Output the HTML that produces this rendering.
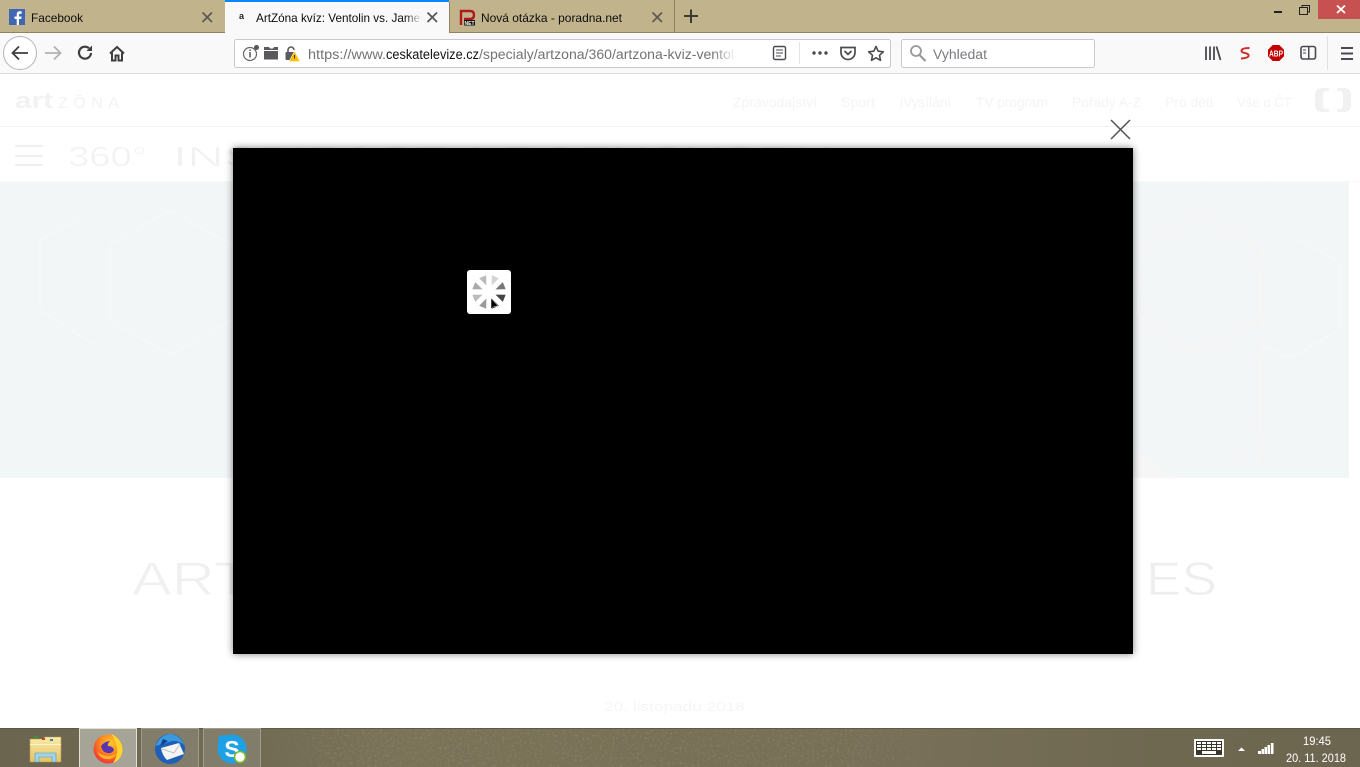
<!DOCTYPE html>
<html lang="cs"><head><meta charset="utf-8"><title>ArtZóna kvíz</title>
<style>
html,body{margin:0;padding:0;width:1360px;height:767px;overflow:hidden;background:#fff}
svg{display:block;position:absolute;left:0;top:0}
text{font-family:"Liberation Sans",sans-serif}
</style></head><body>
<svg width="1360" height="767" viewBox="0 0 1360 767" xmlns="http://www.w3.org/2000/svg">
<defs>
<linearGradient id="fade" x1="0" x2="1"><stop offset="0" stop-color="#f9f9fa" stop-opacity="0"/><stop offset="1" stop-color="#f9f9fa"/></linearGradient>
<linearGradient id="fadew" x1="0" x2="1"><stop offset="0" stop-color="#fff" stop-opacity="0"/><stop offset="1" stop-color="#fff"/></linearGradient>
<linearGradient id="tb" x1="0" x2="1" y1="0" y2="0">
<stop offset="0" stop-color="#6b6550"/><stop offset=".2" stop-color="#736c55"/><stop offset=".3" stop-color="#7a7358"/><stop offset=".5" stop-color="#777056"/><stop offset=".68" stop-color="#776f57"/><stop offset=".85" stop-color="#6f6851"/><stop offset="1" stop-color="#6c6650"/></linearGradient>
<linearGradient id="mk" x1="0" x2="1"><stop offset="0" stop-color="#fff" stop-opacity="0"/><stop offset=".1" stop-color="#fff"/><stop offset=".85" stop-color="#fff"/><stop offset="1" stop-color="#fff" stop-opacity="0"/></linearGradient>
<mask id="tbm" maskUnits="userSpaceOnUse" x="262" y="728" width="700" height="39"><rect x="262" y="728" width="700" height="39" fill="url(#mk)"/></mask>
<filter id="noise" x="0" y="0" width="100%" height="100%"><feTurbulence type="fractalNoise" baseFrequency=".4" numOctaves="3" seed="4"/><feColorMatrix values="0 0 0 0 .62 0 0 0 0 .58 0 0 0 0 .44 0 0 0 1.6 -.8"/></filter>
<radialGradient id="ff" cx=".6" cy=".3" r=".8"><stop offset="0" stop-color="#ffc82e"/><stop offset=".45" stop-color="#ff8a1f"/><stop offset=".8" stop-color="#f5452c"/><stop offset="1" stop-color="#e0305a"/></radialGradient>
<linearGradient id="fold" x1="0" x2="0" y1="0" y2="1"><stop offset="0" stop-color="#fbeaa8"/><stop offset="1" stop-color="#e5c466"/></linearGradient>
<filter id="sh" x="-5%" y="-5%" width="110%" height="110%"><feGaussianBlur stdDeviation="4"/></filter>
</defs>

<!-- page (ghosted behind overlay) -->
<rect width="1360" height="767" fill="#fff"/>
<g fill="#f2f2f2">
<text x="15" y="108" font-size="22" font-weight="700" textLength="38" lengthAdjust="spacingAndGlyphs">art</text>
<text x="58" y="108" font-size="16" fill="#f2f2f2" textLength="61" lengthAdjust="spacing">ZŌNA</text>
<g font-size="14" fill="#f4f4f4">
<text x="733" y="107" textLength="84" lengthAdjust="spacingAndGlyphs">Zpravodajství</text>
<text x="841" y="107" textLength="34" lengthAdjust="spacingAndGlyphs">Sport</text>
<text x="900" y="107" textLength="51" lengthAdjust="spacingAndGlyphs">iVysílání</text>
<text x="976" y="107" textLength="72" lengthAdjust="spacingAndGlyphs">TV program</text>
<text x="1072" y="107" textLength="69" lengthAdjust="spacingAndGlyphs">Pořady A-Z</text>
<text x="1165" y="107" textLength="48" lengthAdjust="spacingAndGlyphs">Pro děti</text>
<text x="1237" y="107" textLength="55" lengthAdjust="spacingAndGlyphs">Vše o ČT</text>
</g>
</g>
<path d="M1329 88h-6q-8 0-8 7v10q0 7 8 7h6v-3h-2q-4 0-4-4V95q0-4 4-4h2zM1337 88h6q8 0 8 7v10q0 7-8 7h-6v-3h2q4 0 4-4V95q0-4-4-4h-2z" fill="#f1f1f1"/>
<rect x="0" y="126" width="1360" height="1" fill="#f3f3f3"/>
<g fill="#f0f0f0"><rect x="15" y="145" width="28" height="2"/><rect x="15" y="155" width="28" height="2"/><rect x="15" y="164" width="28" height="2"/></g>
<g font-size="28" fill="#f1f1f1" stroke="#fff" stroke-width=".6">
<text x="68" y="166" textLength="79" lengthAdjust="spacingAndGlyphs">360°</text>
<text x="173" y="166" textLength="657" lengthAdjust="spacingAndGlyphs">INSPIRACE A ROZHOVORY</text>
</g>
<rect x="0" y="181" width="1360" height="1" fill="#f8f8f8"/>
<rect x="0" y="182" width="1349" height="296" fill="#f2f6f7"/>
<g fill="none" stroke="#f8f7f4" stroke-width="1.500">
<path d="M1202 213L1262 248L1260 317L1198 352L1138 316L1140 248Z"/>
<path d="M1202 182V213M1198 352V400M1270 182V320M1262 320L1258 470"/>
<path d="M1225 440L1255 460"/>
</g>
<g fill="none" stroke="#f6f8f9" stroke-width="1.500">
<path d="M170 210L232 245M170 210L110 245L110 320L170 355L232 320"/>
<path d="M1290 235L1340 262V330L1290 358L1262 345"/>
<path d="M40 240L95 210M40 240V310L95 345"/>
</g>
<path d="M1135 450L1175 478H1135Z" fill="#f5f6f5"/>
<g font-size="47" stroke="#fff" stroke-width=".8">
<text x="132" y="595" fill="#f0f0f0" textLength="118" lengthAdjust="spacingAndGlyphs">ART</text>
<text x="1146" y="595" fill="#eeeeee" textLength="71" lengthAdjust="spacingAndGlyphs">ES</text>
</g>
<text x="604" y="711" font-size="13" fill="#f5f5f5" textLength="141" lengthAdjust="spacingAndGlyphs">20. listopadu 2018</text>

<!-- modal -->
<rect x="233" y="148" width="900" height="506" fill="#000" opacity=".5" filter="url(#sh)"/>
<rect x="233" y="148" width="900" height="506" fill="#000"/>
<path d="M1111 120L1130 139M1130 120L1111 139" stroke="#555" stroke-width="1.500" fill="none"/>
<rect x="467" y="270" width="44" height="44" rx="3" fill="#fff"/>
<g transform="translate(489 292)">
<path transform="rotate(22.500)" d="M0-7L3.800-16.500H-3.800Z" fill="#d4d4d4"/>
<path transform="rotate(67.500)" d="M0-7L3.800-16.500H-3.800Z" fill="#777"/>
<path transform="rotate(112.500)" d="M0-7L3.800-16.500H-3.800Z" fill="#444"/>
<path transform="rotate(157.500)" d="M0-7L3.800-16.500H-3.800Z" fill="#111"/>
<path transform="rotate(202.500)" d="M0-7L3.800-16.500H-3.800Z" fill="#999"/>
<path transform="rotate(247.500)" d="M0-7L3.800-16.500H-3.800Z" fill="#bbb"/>
<path transform="rotate(292.500)" d="M0-7L3.800-16.500H-3.800Z" fill="#aaa"/>
<path transform="rotate(337.500)" d="M0-7L3.800-16.500H-3.800Z" fill="#bbb"/>
</g>
<path d="M491 298V309L494 306.500L498 306Z" fill="#000" stroke="#fff" stroke-width=".5"/>

<!-- tab strip -->
<rect width="1360" height="32" fill="#c1b48c"/>
<rect y="32" width="1360" height="1" fill="#8e8360"/>
<rect x="225" y="0" width="224" height="33" fill="#f9f9fa"/>
<rect x="225" y="0" width="224" height="2" fill="#0a84ff"/>
<rect x="449" y="2" width="1" height="30" fill="#8e8360"/>
<rect x="674" y="0" width="1" height="32" fill="#8e8360"/>

<rect x="9" y="9" width="16" height="16" fill="#4267b2"/>
<path d="M19 25v-6h2.200l.4-2.500H19V15q0-1.300 1.400-1.300h1.300v-2.300q-1-.1-2-.1-3 0-3 3.100v2.100h-2.200V19h2.200v6z" fill="#fff"/>
<g font-size="12" fill="#0c0c0d">
<text x="31" y="22" textLength="52" lengthAdjust="spacingAndGlyphs">Facebook</text>
<text x="256" y="22" textLength="170" lengthAdjust="spacingAndGlyphs">ArtZóna kvíz: Ventolin vs. James</text>
<text x="481" y="22" textLength="141" lengthAdjust="spacingAndGlyphs">Nová otázka - poradna.net</text>
</g>
<rect x="405" y="8" width="17" height="18" fill="url(#fade)"/>
<rect x="422" y="8" width="6" height="18" fill="#f9f9fa"/>
<text x="239" y="19" font-size="9" font-weight="700" fill="#222">a</text>
<g stroke="#5c5a50" stroke-width="1.700" fill="none">
<path d="M202.500 12.500L212 22M212 12.500L202.500 22"/>
<path d="M652.500 12.500L662 22M662 12.500L652.500 22"/>
</g>
<path d="M427.500 12.500L437 22M437 12.500L427.500 22" stroke="#555" stroke-width="1.700" fill="none"/>
<path d="M461 25V11H470Q474 11 474 15T470 19H464" fill="none" stroke="#b01818" stroke-width="2.400"/>
<rect x="464" y="20" width="11" height="5.500" fill="#111"/>
<text x="464.500" y="25" font-size="5.500" font-weight="700" fill="#fff" textLength="10" lengthAdjust="spacingAndGlyphs">NET</text>
<path d="M691 9.500V23M684 16H698" stroke="#3a3a32" stroke-width="2" fill="none"/>

<!-- window buttons -->
<rect x="1318" y="0" width="42" height="19" fill="#c75050"/>
<path d="M1337 5.500L1345 13M1345 5.500L1337 13" stroke="#fff" stroke-width="1.800" fill="none"/>
<rect x="1274" y="11" width="8" height="2" fill="#222"/>
<rect x="1299.500" y="7.500" width="8" height="7" fill="none" stroke="#222"/>
<path d="M1302 7V5.500H1309.500V12H1308" fill="none" stroke="#222"/>

<!-- toolbar -->
<rect y="33" width="1360" height="40" fill="#f9f9fa"/>
<rect y="73" width="1360" height="1" fill="#dcdcdc"/>
<circle cx="20" cy="53" r="16.500" fill="#fff" stroke="#b5b5b5"/>
<path d="M28 53H13M19 46.500L12.500 53L19 59.500" fill="none" stroke="#3e3e40" stroke-width="1.800"/>
<path d="M45 53H60M54 46.500L60.500 53L54 59.500" fill="none" stroke="#b1b1b3" stroke-width="1.800"/>
<path d="M91 53a6 6 0 1 1-2-4.800" fill="none" stroke="#3e3e40" stroke-width="2.200"/>
<path d="M92 45.500V51H86.500Z" fill="#3e3e40"/>
<path d="M110 53.500L117 47L124 53.500M112 52.500V60.500H115.500V55.500H118.500V60.500H122V52.500" fill="none" stroke="#3e3e40" stroke-width="2"/>

<rect x="234.500" y="39.500" width="656" height="28" rx="2" fill="#fff" stroke="#c9c9cb"/>
<circle cx="250" cy="54" r="6.500" fill="none" stroke="#66666a" stroke-width="1.200"/>
<rect x="249.300" y="52" width="1.500" height="5.500" fill="#55555a"/><rect x="249.300" y="49.500" width="1.500" height="1.500" fill="#55555a"/>
<circle cx="256.500" cy="47.500" r="2.500" fill="#55555a"/>
<path d="M264 47h5l1 1.500h3l1-1.500h4v12.500h-14z" fill="#5a5a5e"/>
<rect x="264" y="50" width="14" height="1" fill="#fff"/>
<path d="M288 52V50a3 3 0 0 1 6 0" fill="none" stroke="#5a5a5e" stroke-width="1.600"/>
<rect x="285.500" y="52" width="9" height="8" rx="1" fill="#5a5a5e"/>
<path d="M294.500 51L300 61.500H289Z" fill="#ffbf00" stroke="#fff" stroke-width=".5"/>
<rect x="294" y="55" width="1" height="3.500" fill="#333"/>
<g font-size="13.500">
<text x="308" y="59" fill="#737373" textLength="78" lengthAdjust="spacingAndGlyphs">https://www.</text>
<text x="386" y="59" fill="#111" textLength="93" lengthAdjust="spacingAndGlyphs">ceskatelevize.cz</text>
<text x="479" y="59" fill="#737373" textLength="255" lengthAdjust="spacingAndGlyphs">/specialy/artzona/360/artzona-kviz-ventol</text>
</g>
<rect x="712" y="44" width="24" height="20" fill="url(#fadew)"/>
<rect x="773.500" y="46.500" width="12" height="13" rx="1.500" fill="none" stroke="#4a4a4f" stroke-width="1.400"/>
<path d="M776 50H783M776 53H783M776 56H781" stroke="#4a4a4f"/>
<rect x="799" y="42" width="1" height="22" fill="#e4e4e4"/>
<g fill="#4a4a4f"><circle cx="814" cy="53" r="1.700"/><circle cx="820" cy="53" r="1.700"/><circle cx="826" cy="53" r="1.700"/></g>
<path d="M841 47.500H855V52.500A7 7 0 0 1 841 52.500Z" fill="none" stroke="#4a4a4f" stroke-width="1.700"/>
<path d="M844.500 51L848 54.300L851.500 51" fill="none" stroke="#4a4a4f" stroke-width="1.700"/>
<path d="M876 46.500L878.200 51.200L883.300 51.800L879.500 55.300L880.500 60.300L876 57.800L871.500 60.300L872.500 55.300L868.700 51.800L873.800 51.200Z" fill="none" stroke="#4a4a4f" stroke-width="1.600" stroke-linejoin="round"/>

<rect x="901.500" y="39.500" width="193" height="28" rx="2" fill="#fff" stroke="#c9c9cb"/>
<circle cx="916" cy="51" r="5" fill="none" stroke="#999" stroke-width="1.800"/>
<path d="M919.500 55L925.500 61" stroke="#999" stroke-width="2.200"/>
<text x="933" y="59" font-size="13.500" fill="#7a7a80" textLength="54" lengthAdjust="spacingAndGlyphs">Vyhledat</text>

<path d="M1206 46.500V60M1210 46.500V60M1214 46.500V60M1216.500 46.500L1220.500 60" fill="none" stroke="#4a4a4f" stroke-width="1.800"/>
<path d="M1249.500 48Q1242 48 1241.500 50.500Q1241.500 52.500 1245 53Q1249 53.800 1248.500 56Q1248 58 1241 58.500" fill="none" stroke="#c9302c" stroke-width="2"/>
<path d="M1272.700 45H1279.300L1284 49.700V56.300L1279.300 61H1272.700L1268 56.300V49.700Z" fill="#c40000"/>
<text x="1269" y="56.500" font-size="8" font-weight="700" fill="#fff" textLength="14" lengthAdjust="spacingAndGlyphs">ABP</text>
<rect x="1301" y="46.500" width="14.500" height="12.500" rx="2" fill="none" stroke="#4a4a4f" stroke-width="1.600"/>
<rect x="1308" y="46.500" width="1.500" height="12.500" fill="#4a4a4f"/>
<path d="M1303 50H1306M1303 53H1306" stroke="#4a4a4f"/>
<rect x="1327" y="36" width="1" height="34" fill="#e1e1e1"/>
<g fill="#4a4a4f"><rect x="1341" y="47" width="12" height="2"/><rect x="1341" y="52.500" width="12" height="2"/><rect x="1341" y="58" width="12" height="2"/></g>

<!-- taskbar -->
<rect y="728" width="1360" height="39" fill="url(#tb)"/>
<g mask="url(#tbm)"><rect x="262" y="728" width="700" height="39" filter="url(#noise)" opacity=".3"/></g>
<rect y="728" width="1360" height="1" fill="#5f5a47"/>
<rect x="79.500" y="728.500" width="57" height="39" fill="#a6a397" stroke="#e2e0d8"/>
<rect x="141.500" y="728.500" width="57" height="39" fill="#827c6a" stroke="#a09b8c"/>
<rect x="203.500" y="728.500" width="57" height="39" fill="#827c6a" stroke="#a09b8c"/>

<path d="M30 739H43L45 737H61V762H30Z" fill="url(#fold)" stroke="#b89a4a" stroke-width=".6"/>
<rect x="34" y="736" width="3" height="2" fill="#2aa02a"/><rect x="42" y="738" width="3" height="2" fill="#c04030"/><rect x="50" y="739" width="3" height="2" fill="#3080d0"/>
<path d="M35 762V753H56V762H52V757H39V762Z" fill="#9fd4ea" stroke="#4f9cc4" stroke-width=".6"/>
<rect x="30" y="744" width="31" height="1" fill="#fff5c8"/>

<circle cx="108" cy="749" r="14.500" fill="url(#ff)"/>
<path d="M111 733.500Q123 740 122.500 751Q121 760 113 763Q119 754 116.500 746Q115 739 111 733.500Z" fill="#ffd52e"/>
<path d="M101 746Q105 741 110 741Q107 744 108 746Q113 746 114 750Q112 754 107 753Q102 752 101 746Z" fill="#5a35b0"/>
<path d="M97 751Q100 760 110 759Q116 757 118 752Q113 757 107 756Q100 755 97 751Z" fill="#ffb42a"/>

<circle cx="170" cy="749" r="15" fill="#1f5fb8"/>
<path d="M155.500 746Q160 735 170 734Q180 735 184.500 745Q178 740 172 741L166 743Z" fill="#3a9ae0"/>
<path d="M161 748L179 743L184 754L167 760Q162 755 161 748Z" fill="#f4f4f0"/>
<path d="M162 749L174 753L180 744" fill="none" stroke="#b8c4d2"/>
<path d="M163 739L168 741L160 746Z" fill="#163f86"/>

<circle cx="232" cy="749" r="14.500" fill="#1ea0e6"/>
<rect x="218" y="735" width="12" height="12" rx="5" fill="#1ea0e6"/>
<text x="232" y="757" text-anchor="middle" font-size="23" font-weight="700" fill="#fff">S</text>
<circle cx="240" cy="757" r="5.500" fill="#fff" stroke="#7cb82f" stroke-width="1.600"/>

<rect x="1194" y="739" width="30" height="18" rx="1" fill="#fff"/>
<rect x="1196" y="741" width="26" height="14" fill="#3a3628"/>
<g fill="#fff">
<rect x="1197" y="742" width="4" height="2"/><rect x="1202" y="742" width="4" height="2"/><rect x="1207" y="742" width="4" height="2"/><rect x="1212" y="742" width="4" height="2"/><rect x="1217" y="742" width="4" height="2"/>
<rect x="1197" y="745" width="4" height="2"/><rect x="1202" y="745" width="4" height="2"/><rect x="1207" y="745" width="4" height="2"/><rect x="1212" y="745" width="4" height="2"/><rect x="1217" y="745" width="4" height="2"/>
<rect x="1197" y="748" width="4" height="2"/><rect x="1202" y="748" width="4" height="2"/><rect x="1207" y="748" width="4" height="2"/><rect x="1212" y="748" width="4" height="2"/><rect x="1217" y="748" width="4" height="2"/>
<rect x="1202" y="751" width="14" height="3"/>
<path d="M1238 751L1241.500 747.500L1245 751Z"/>
<rect x="1258" y="751" width="3" height="3"/><rect x="1261.500" y="749" width="2.500" height="5"/><rect x="1264.500" y="747" width="2.500" height="7"/><rect x="1267.500" y="745" width="2.500" height="9"/>
<rect x="1270.800" y="743" width="2.700" height="11"/>
</g>
<text x="1317" y="745" text-anchor="middle" font-size="12" fill="#fff" textLength="28" lengthAdjust="spacingAndGlyphs">19:45</text>
<text x="1316" y="762" text-anchor="middle" font-size="12" fill="#fff" textLength="60" lengthAdjust="spacingAndGlyphs">20. 11. 2018</text>
</svg>
</body></html>
